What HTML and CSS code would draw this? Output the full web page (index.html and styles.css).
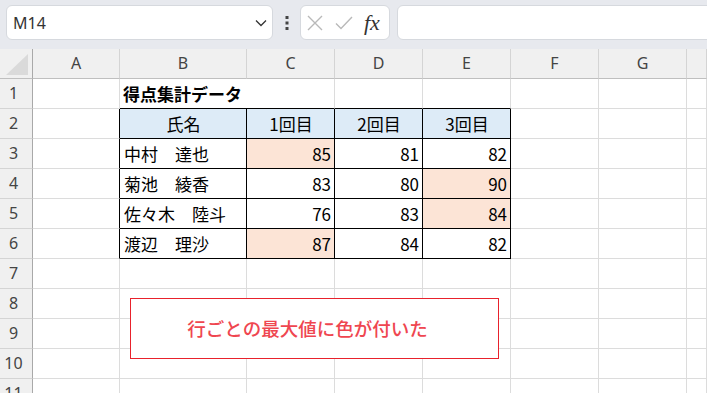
FILE: index.html
```html
<!DOCTYPE html>
<html lang="ja">
<head>
    <meta charset="UTF-8">
    <title>得点集計データ</title>
    <link rel="stylesheet" href="styles.css">
</head>
<body>
    <div class="topbar">
        <div class="namebox">
            <span class="name">M14</span>
            <svg class="chevron" width="12" height="8" viewBox="0 0 12 8"><path d="M1 1.5 L6 6.5 L11 1.5" fill="none" stroke="#333" stroke-width="1.3"/></svg>
        </div>
        <div class="dots">
            <svg width="4" height="14" viewBox="0 0 4 14"><rect x="0.5" y="0" width="3" height="3" fill="#444"/><rect x="0.5" y="5.5" width="3" height="3" fill="#444"/><rect x="0.5" y="11" width="3" height="3" fill="#444"/></svg>
        </div>
        <div class="fxbox">
            <svg width="16" height="16" viewBox="0 0 16 16"><path d="M1 1 L15 15 M15 1 L1 15" stroke="#b9b9b9" stroke-width="1.4"/></svg>
            <svg width="18" height="14" viewBox="0 0 18 14"><path d="M1 7.5 L6 12.5 L17 1" fill="none" stroke="#b9b9b9" stroke-width="1.4"/></svg>
            <span class="fx">fx</span>
        </div>
        <div class="formula"></div>
    </div>

    <div class="sheet">
        <div class="corner"><svg width="32" height="29" viewBox="0 0 32 29"><polygon points="6,26 28,26 28,5" fill="#dadada"/></svg></div>
        <div class="colh">A</div><div class="colh">B</div><div class="colh">C</div><div class="colh">D</div><div class="colh">E</div><div class="colh">F</div><div class="colh">G</div><div class="colh"></div>

        <div class="rowh">1</div><div class="cell"></div><div class="cell above wide title">得点集計データ</div><div class="cell above"></div><div class="cell above"></div><div class="cell"></div><div class="cell"></div><div class="cell"></div>

        <div class="rowh">2</div><div class="cell left"></div><div class="cell t th">氏名</div><div class="cell t th">1回目</div><div class="cell t th">2回目</div><div class="cell t th">3回目</div><div class="cell"></div><div class="cell"></div><div class="cell"></div>

        <div class="rowh">3</div><div class="cell left"></div><div class="cell t">中村　達也</div><div class="cell t num max">85</div><div class="cell t num">81</div><div class="cell t num">82</div><div class="cell"></div><div class="cell"></div><div class="cell"></div>

        <div class="rowh">4</div><div class="cell left"></div><div class="cell t">菊池　綾香</div><div class="cell t num">83</div><div class="cell t num">80</div><div class="cell t num max">90</div><div class="cell"></div><div class="cell"></div><div class="cell"></div>

        <div class="rowh">5</div><div class="cell left"></div><div class="cell t">佐々木　陸斗</div><div class="cell t num">76</div><div class="cell t num">83</div><div class="cell t num max">84</div><div class="cell"></div><div class="cell"></div><div class="cell"></div>

        <div class="rowh">6</div><div class="cell left"></div><div class="cell t">渡辺　理沙</div><div class="cell t num max">87</div><div class="cell t num">84</div><div class="cell t num">82</div><div class="cell"></div><div class="cell"></div><div class="cell"></div>

        <div class="rowh">7</div><div class="cell"></div><div class="cell"></div><div class="cell"></div><div class="cell"></div><div class="cell"></div><div class="cell"></div><div class="cell"></div><div class="cell"></div>
        <div class="rowh">8</div><div class="cell"></div><div class="cell"></div><div class="cell"></div><div class="cell"></div><div class="cell"></div><div class="cell"></div><div class="cell"></div><div class="cell"></div>
        <div class="rowh">9</div><div class="cell"></div><div class="cell"></div><div class="cell"></div><div class="cell"></div><div class="cell"></div><div class="cell"></div><div class="cell"></div><div class="cell"></div>
        <div class="rowh">10</div><div class="cell"></div><div class="cell"></div><div class="cell"></div><div class="cell"></div><div class="cell"></div><div class="cell"></div><div class="cell"></div><div class="cell"></div>
        <div class="rowh">11</div><div class="cell"></div><div class="cell"></div><div class="cell"></div><div class="cell"></div><div class="cell"></div><div class="cell"></div><div class="cell"></div><div class="cell"></div>
    </div>

    <!-- text box shape floating over the sheet -->
    <div class="callout">行ごとの最大値に色が付いた</div>
</body>
</html>
```

FILE: styles.css
```css
* {
    box-sizing: border-box;
}
body {
    margin: 0;
    width: 707px;
    height: 393px;
    overflow: hidden;
    position: relative;
    background: #fff;
    font-family: "Noto Sans CJK JP", sans-serif;
    color: #000;
}
.topbar {
    display: flex;
    align-items: flex-start;
    height: 49px;
    padding: 5px 0 0 6px;
    background: #e7e9ee;
}
.namebox, .fxbox, .formula {
    height: 35px;
    background: #fff;
    border: 1px solid #d6d9de;
    border-radius: 6px;
}
.namebox {
    width: 267px;
    display: flex;
    align-items: center;
    justify-content: space-between;
    padding: 0 5px 0 6px;
}
.name {
    font-family: "Noto Sans", sans-serif;
    font-size: 16px;
    color: #333;
}
.dots {
    width: 27px;
    height: 35px;
    display: flex;
    align-items: center;
    justify-content: center;
}
.fxbox {
    width: 90px;
    display: flex;
    align-items: center;
    gap: 12px;
    padding-left: 6px;
}
.fx {
    font-family: "Liberation Serif", serif;
    font-style: italic;
    font-size: 22px;
    color: #333;
    margin-left: -1px;
}
.formula {
    flex: 1;
    margin-left: 7px;
    margin-right: -10px;
}
.sheet {
    display: grid;
    grid-template-columns: 33px 87px 127px 88px 88px 88px 88px 88px 1fr;
    grid-auto-rows: 30px;
}
.corner, .colh, .rowh {
    background: #f0f0f0;
}
.corner {
    border-right: 1px solid #a9a9a9;
    border-bottom: 1px solid #bfbfbf;
}
.corner svg {
    display: block;
}
.colh {
    border-right: 1px solid #d4d4d4;
    border-bottom: 1px solid #bfbfbf;
    font-family: "Noto Sans", sans-serif;
    font-size: 16px;
    color: #444;
    text-align: center;
    line-height: 29px;
}
.rowh {
    border-right: 1px solid #a9a9a9;
    border-bottom: 1px solid #d4d4d4;
    font-family: "Noto Sans", sans-serif;
    font-size: 16px;
    color: #444;
    text-align: center;
    padding-right: 5px;
    line-height: 29px;
}
.cell {
    border-right: 1px solid #dcdcdc;
    border-bottom: 1px solid #dcdcdc;
    font-size: 17px;
    line-height: 29px;
    padding: 0 3px 0 4px;
    white-space: nowrap;
    overflow: hidden;
}
.wide {
    grid-column: span 2;
    overflow: visible;
}
.title {
    font-weight: bold;
    padding-left: 3px;
}
.above {
    border-bottom-color: #000;
}
.left {
    border-right-color: #000;
}
.t {
    border-right-color: #000;
    border-bottom-color: #000;
}
.th {
    background: #ddebf7;
    text-align: center;
}
.num {
    text-align: right;
}
.max {
    background: #fce4d6;
}
.callout {
    position: absolute;
    left: 130px;
    top: 298px;
    width: 369px;
    height: 61px;
    border: 1px solid #e8222c;
    background: #fff;
    display: flex;
    align-items: center;
    justify-content: center;
    font-size: 18.5px;
    font-weight: 500;
    color: #ef4650;
    padding: 0 14px 1px 0;
}
```
